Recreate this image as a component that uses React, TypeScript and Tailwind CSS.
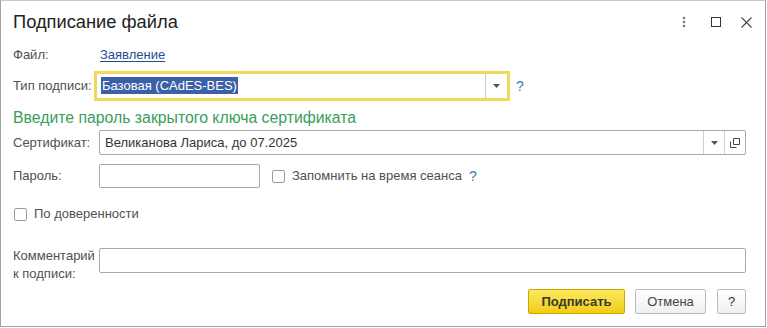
import React from 'react';

const font = { fontFamily: '"Liberation Sans", Arial, sans-serif' };

function Checkbox() {
  return <span className="inline-block w-[13px] h-[13px] border border-[#9c9c9c] rounded-[2px] bg-white shrink-0" />;
}

function Arrow() {
  return (
    <svg width="7" height="4" viewBox="0 0 7 4">
      <path d="M0 0h7L3.5 4z" fill="#555" />
    </svg>
  );
}

function Help({ className = '' }: { className?: string }) {
  return <span className={`text-[14px] text-[#2f7fb5] ${className}`}>?</span>;
}

export default function App() {
  return (
    <div className="w-[767px] h-[328px] bg-white" style={font}>
      <div className="w-[766px] h-[327px] border border-[#a3a3a3] border-t-[#c8c8c8] bg-white flex flex-col text-[13px] text-[#505050]">
        {/* title bar */}
        <div className="flex items-center h-[22px] mt-[10px] pl-[12px] pr-[13px]">
          <h1 className="text-[18.3px] leading-[22px] text-[#222]">Подписание файла</h1>
          <div className="ml-auto flex items-center">
            <svg width="4" height="12" viewBox="0 0 4 12" className="mr-[25px]">
              <circle cx="2" cy="2" r="1.3" fill="#777" />
              <circle cx="2" cy="6" r="1.3" fill="#777" />
              <circle cx="2" cy="10" r="1.3" fill="#777" />
            </svg>
            <span className="w-[10px] h-[10px] border border-[#333] mr-[20px]" />
            <svg width="11" height="11" viewBox="0 0 11 11">
              <path d="M0.5 0.5l10 10M10.5 0.5l-10 10" stroke="#444" strokeWidth="1.1" />
            </svg>
          </div>
        </div>

        <div className="flex flex-col pl-[12px] pr-[19px]">
          {/* file */}
          <div className="flex items-center h-[20px] mt-[12px]">
            <span className="w-[87px]">Файл:</span>
            <a className="text-[#1d4f8c] underline underline-offset-2">Заявление</a>
          </div>

          {/* signature type */}
          <div className="flex items-center h-[30px] mt-[6px]">
            <span className="w-[81px]">Тип подписи:</span>
            <div className="w-[416px] h-[30px] border-[3px] border-[#efd85a] flex items-center bg-white">
              <div className="flex-1 pl-[4px]">
                <span className="bg-[#3b5fa8] text-white px-[1px] leading-[17px] inline-block text-[13px]">Базовая (CAdES-BES)</span>
              </div>
              <div className="w-[22px] h-full border-l border-[#c9c9c9] flex items-center justify-center">
                <Arrow />
              </div>
            </div>
            <Help className="ml-[6px]" />
          </div>

          {/* hint */}
          <div className="h-[18px] mt-[8px] flex items-center text-[15.8px] text-[#3a9d5b]">
            Введите пароль закрытого ключа сертификата
          </div>

          {/* certificate */}
          <div className="flex items-center h-[25px] mt-[3px]">
            <span className="w-[86px]">Сертификат:</span>
            <div className="flex-1 h-[25px] border border-[#a9a9a9] rounded-[2px] flex items-center">
              <span className="flex-1 pl-[5px] text-[#333]">Великанова Лариса, до 07.2025</span>
              <div className="w-[21px] h-full border-l border-[#cfcfcf] flex items-center justify-center">
                <Arrow />
              </div>
              <div className="w-[21px] h-full border-l border-[#cfcfcf] flex items-center justify-center">
                <svg width="10" height="10" viewBox="0 0 10 10">
                  <path d="M3.5 0.5h6v6h-6z" fill="none" stroke="#444" />
                  <path d="M0.5 3.5v6h6" fill="none" stroke="#444" />
                </svg>
              </div>
            </div>
          </div>

          {/* password */}
          <div className="flex items-center h-[24px] mt-[9px]">
            <span className="w-[86px]">Пароль:</span>
            <div className="w-[161px] h-[24px] border border-[#a9a9a9] rounded-[2px]" />
            <div className="ml-[12px] flex items-center">
              <Checkbox />
              <span className="ml-[7px]">Запомнить на время сеанса</span>
              <Help className="ml-[7px]" />
            </div>
          </div>

          {/* proxy */}
          <div className="flex items-center h-[20px] mt-[16px] pl-[1px]">
            <Checkbox />
            <span className="ml-[7px]">По доверенности</span>
          </div>

          {/* comment */}
          <div className="flex items-start h-[25px] mt-[24px]">
            <span className="w-[86px] leading-[18px] -mt-[1px]">
              Комментарий
              <br />к подписи:
            </span>
            <div className="flex-1 h-[25px] border border-[#a9a9a9] rounded-[2px]" />
          </div>

          {/* buttons */}
          <div className="flex justify-end mt-[16px] h-[25px]">
            <button className="w-[97px] h-[25px] rounded-[2px] border border-[#c9a900] bg-gradient-to-b from-[#fde95c] to-[#f1cc06] text-[#3a3a2a] font-bold text-[13px]">
              Подписать
            </button>
            <button className="w-[71px] h-[25px] ml-[10px] rounded-[2px] border border-[#bdbdbd] bg-gradient-to-b from-white to-[#f0f0f0] text-[#444] text-[13px]">
              Отмена
            </button>
            <button className="w-[29px] h-[25px] ml-[11px] rounded-[2px] border border-[#bdbdbd] bg-gradient-to-b from-white to-[#f0f0f0] text-[#333] text-[13px]">
              ?
            </button>
          </div>
        </div>
      </div>
    </div>
  );
}
